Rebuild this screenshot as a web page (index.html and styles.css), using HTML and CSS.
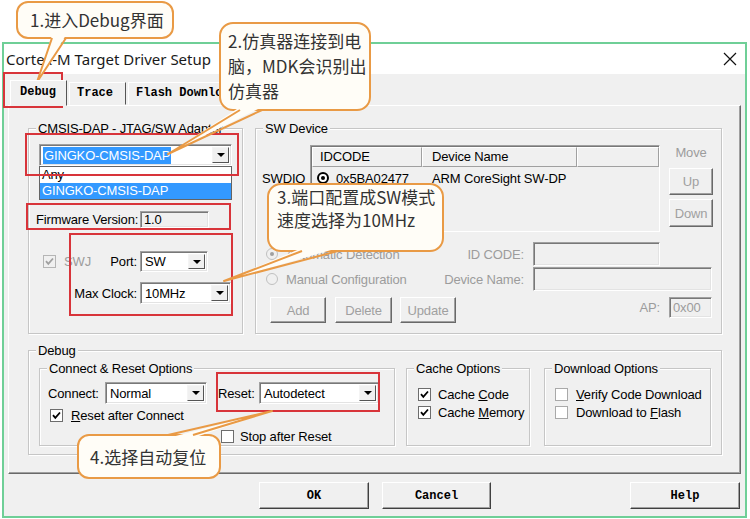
FILE: index.html
```html
<!DOCTYPE html>
<html lang="zh-CN">
<head>
<meta charset="UTF-8" />
<title>Cortex-M Target Driver Setup</title>
<link rel="stylesheet" href="styles.css">
</head>
<body>
<div class="screen">
  <div class="window">
    <div class="titlebar">
      <span class="title">Cortex-M Target Driver Setup</span>
      <svg class="close" width="14" height="14" viewBox="0 0 14 14"><path d="M1 1L13 13M13 1L1 13" stroke="#111" stroke-width="1.2" fill="none"/></svg>
    </div>

    <div class="client">
      <div class="tabs">
        <div class="tab active">Debug</div>
        <div class="tab">Trace</div>
        <div class="tab">Flash Download</div>
      </div>

      <div class="panel">
        <div class="top-row">
          <!-- adapter selection -->
          <div class="group adapter">
            <span class="group-title">CMSIS-DAP - JTAG/SW Adapter</span>
            <div class="combo open">
              <span class="val"><span class="sel">GINGKO-CMSIS-DAP</span></span>
              <span class="arrow"></span>
            </div>
            <div class="dd-list">
              <div class="dd-item">Any</div>
              <div class="dd-item hl">GINGKO-CMSIS-DAP</div>
            </div>
            <div class="fw-row">
              <span class="fw-label">Firmware Version:</span>
              <span class="edit ro fw-box">1.0</span>
            </div>
            <div class="cfg-row first">
              <div class="cfg-label">
                <span class="check dis on"><svg width="11" height="11" viewBox="0 0 11 11"><path d="M2 5.2l2.3 2.6 4.7-5.3" fill="none" stroke="#a0a0a0" stroke-width="1.8"/></svg></span>
                <span class="dim swj">SWJ</span>
                <span class="push">Port:</span>
              </div>
              <div class="combo port"><span class="val">SW</span><span class="arrow"></span></div>
            </div>
            <div class="cfg-row">
              <div class="cfg-label"><span class="push">Max Clock:</span></div>
              <div class="combo clock"><span class="val">10MHz</span><span class="arrow"></span></div>
            </div>
          </div>

          <!-- detected devices -->
          <div class="group swdev">
            <span class="group-title">SW Device</span>
            <div class="sw-top">
              <div class="swdio">SWDIO</div>
              <div class="table">
                <div class="thead">
                  <span class="th c1">IDCODE</span>
                  <span class="th c2">Device Name</span>
                  <span class="th c3"></span>
                </div>
                <div class="trow">
                  <span class="td c1"><span class="radio bold on"></span>0x5BA02477</span>
                  <span class="td c2">ARM CoreSight SW-DP</span>
                </div>
              </div>
              <div class="move-col">
                <div class="dim move">Move</div>
                <div class="sbtn up">Up</div>
                <div class="sbtn down">Down</div>
              </div>
            </div>
            <div class="det-row first">
              <div class="det-label">
                <span class="radio dis on"></span><span class="dim">Automatic Detection</span>
                <span class="push dim">ID CODE:</span>
              </div>
              <span class="edit ro idcode"></span>
            </div>
            <div class="det-row">
              <div class="det-label">
                <span class="radio dis"></span><span class="dim">Manual Configuration</span>
                <span class="push dim">Device Name:</span>
              </div>
              <span class="edit ro devname"></span>
            </div>
            <div class="act-row">
              <div class="sbtn add">Add</div>
              <div class="sbtn del">Delete</div>
              <div class="sbtn upd">Update</div>
              <span class="dim ap-label">AP:</span>
              <span class="edit ro ap-box dim">0x00</span>
            </div>
          </div>
        </div>

        <!-- debug options -->
        <div class="group debug">
          <span class="group-title">Debug</span>
          <div class="dbg-row">
            <div class="group connect">
              <span class="group-title">Connect &amp; Reset Options</span>
              <div class="conn-row">
                <span class="conn-label">Connect:</span>
                <div class="combo normal"><span class="val">Normal</span><span class="arrow"></span></div>
                <span class="reset-label">Reset:</span>
                <div class="combo reset"><span class="val">Autodetect</span><span class="arrow"></span></div>
              </div>
              <div class="opt after-connect">
                <span class="check on"><svg width="11" height="11" viewBox="0 0 11 11"><path d="M2 5.2l2.3 2.6 4.7-5.3" fill="none" stroke="#000" stroke-width="1.8"/></svg></span>
                <span class="opt-text"><u>R</u>eset after Connect</span>
              </div>
              <div class="opt stop-reset">
                <span class="check"></span>
                <span class="opt-text">Stop after Reset</span>
              </div>
            </div>
            <div class="group cache">
              <span class="group-title">Cache Options</span>
              <div class="opt first">
                <span class="check on"><svg width="11" height="11" viewBox="0 0 11 11"><path d="M2 5.2l2.3 2.6 4.7-5.3" fill="none" stroke="#000" stroke-width="1.8"/></svg></span>
                <span class="opt-text">Cache <u>C</u>ode</span>
              </div>
              <div class="opt">
                <span class="check on"><svg width="11" height="11" viewBox="0 0 11 11"><path d="M2 5.2l2.3 2.6 4.7-5.3" fill="none" stroke="#000" stroke-width="1.8"/></svg></span>
                <span class="opt-text">Cache <u>M</u>emory</span>
              </div>
            </div>
            <div class="group download">
              <span class="group-title">Download Options</span>
              <div class="opt first">
                <span class="check light"></span>
                <span class="opt-text"><u>V</u>erify Code Download</span>
              </div>
              <div class="opt">
                <span class="check light"></span>
                <span class="opt-text">Download to <u>F</u>lash</span>
              </div>
            </div>
          </div>
        </div>
      </div>

      <div class="buttons">
        <button class="btn">OK</button>
        <button class="btn cancel">Cancel</button>
        <button class="btn help">Help</button>
      </div>
    </div>
  </div>

  <!-- annotations: highlight frames and callouts -->
  <svg class="annot" width="750" height="519" viewBox="0 0 750 519">
    <g fill="none" stroke="#d8343a" stroke-width="2">
      <rect x="4" y="73" width="58" height="34"/>
      <rect x="26" y="134" width="212" height="41"/>
      <rect x="27" y="204" width="203" height="25"/>
      <rect x="70" y="234" width="162" height="81"/>
      <rect x="217" y="373" width="162" height="38"/>
    </g>
    <g fill="#fffdf7" stroke="#e99a45" stroke-width="2" stroke-linejoin="round">
      <rect x="17" y="2" width="156" height="36" rx="11"/>
      <polygon points="52,35 66,35 37,82" stroke="none"/>
      <polyline points="52,38 37,82 66,38" fill="none"/>

      <rect x="220" y="23" width="150" height="87" rx="13"/>
      <polygon points="240,107 262,107 168,154" stroke="none"/>
      <polyline points="240,110 168,154 262,110" fill="none"/>

      <rect x="268" y="184" width="175" height="67" rx="13"/>
      <polygon points="302,248 338,248 224,281" stroke="none"/>
      <polyline points="302,251 224,281 338,251" fill="none"/>

      <rect x="78" y="435" width="142" height="43" rx="11"/>
      <polygon points="168,438 193,438 272,411" stroke="none"/>
      <polyline points="168,435 272,411 193,435" fill="none"/>
    </g>
  </svg>
  <div class="note note-1">1.进入Debug界面</div>
  <div class="note note-2">2.仿真器连接到电<br>脑，MDK会识别出<br>仿真器</div>
  <div class="note note-3">3.端口配置成SW模式<br>速度选择为10MHz</div>
  <div class="note note-4">4.选择自动复位</div>
</div>
</body>
</html>
```

FILE: styles.css
```css
* { box-sizing: border-box; }
body {
  margin: 0;
  background: #fff;
  font-family: "Liberation Sans", Arial, sans-serif;
  font-size: 13px;
  line-height: 15px;
  letter-spacing: -0.15px;
  color: #000;
}
.screen {
  position: relative;
  width: 750px;
  height: 519px;
  overflow: hidden;
  padding: 42px 0 0 2px;
}
.window {
  width: 745px;
  height: 476px;
  border: 2px solid #6fcf97;
  background: #f0f0f0;
  display: flex;
  flex-direction: column;
}
.titlebar {
  height: 30px;
  background: #fff;
  display: flex;
  align-items: center;
  padding: 0 8px 0 2px;
  flex-shrink: 0;
}
.title {
  font-family: "Noto Sans", sans-serif;
  font-size: 15px;
  letter-spacing: 0;
  color: #1a1a1a;
}
.close { margin-left: auto; }

.client {
  flex: 1;
  padding: 6px 4px 0 4px;
}

/* tabs */
.tabs {
  display: flex;
  align-items: flex-end;
  height: 25px;
  padding-left: 2px;
  font-family: "Liberation Mono", monospace;
  font-weight: bold;
  font-size: 12px;
  letter-spacing: 0;
}
.tab {
  height: 23px;
  line-height: 21px;
  padding: 0 12px 0 7px;
  border: 1px solid;
  border-color: #fff #555 transparent #fff;
  margin-left: 2px;
  white-space: nowrap;
}
.tab.active {
  height: 26px;
  margin: 0 0 -1px 0;
  padding: 1px 10px 0 9px;
  background: #f0f0f0;
  position: relative;
  z-index: 1;
  border-color: #fff #555 #f0f0f0 #fff;
}

.panel {
  height: 369px;
  border: 1px solid;
  border-color: #fff #696969 #696969 #fff;
  box-shadow: inset -1px -1px 0 #a0a0a0;
  padding: 22px 0 0 19px;
}

/* group boxes */
.group {
  position: relative;
  border: 1px solid #c6c6c6;
  box-shadow: inset 1px 1px 0 #fff, 1px 1px 0 #fff;
}
.group-title {
  position: absolute;
  top: -8px;
  left: 7px;
  padding: 0 2px;
  background: #f0f0f0;
  white-space: nowrap;
}
.top-row {
  display: flex;
  gap: 12px;
  height: 206px;
}
.adapter { width: 215px; }
.swdev { width: 467px; }

.dim { color: #9c9c9c; }
.push { margin-left: auto; }

/* edits and combos */
.edit {
  display: flex;
  align-items: center;
  background: #fff;
  border: 1px solid;
  border-color: #a0a0a0 #fff #fff #a0a0a0;
  box-shadow: inset 1px 1px 0 #787878, inset -1px -1px 0 #e3e3e3;
  padding-left: 3px;
}
.edit.ro { background: #f0f0f0; }

.combo {
  display: flex;
  align-items: center;
  height: 22px;
  background: #fff;
  border: 1px solid;
  border-color: #a0a0a0 #fff #fff #a0a0a0;
  box-shadow: inset 1px 1px 0 #787878, inset -1px -1px 0 #e3e3e3;
  padding: 2px;
}
.combo .val {
  flex: 1;
  padding-left: 2px;
  white-space: nowrap;
}
.combo .arrow {
  width: 17px;
  align-self: stretch;
  background: #f0f0f0;
  border: 1px solid;
  border-color: #f4f4f4 #555 #555 #f4f4f4;
  display: flex;
  align-items: center;
  justify-content: center;
}
.combo .arrow::after {
  content: "";
  border-left: 4px solid transparent;
  border-right: 4px solid transparent;
  border-top: 4px solid #000;
}
.combo.open {
  margin: 15px 0 0 10px;
  width: 193px;
}
.combo.open .val { padding-left: 1px; }
.sel {
  background: #3399ff;
  color: #fff;
  padding: 1px 1px;
}
.dd-list {
  margin-left: 10px;
  width: 193px;
  height: 34px;
  background: #fff;
  border: 1px solid #646464;
}
.dd-item {
  height: 16px;
  line-height: 16px;
  padding-left: 2px;
}
.dd-item.hl {
  background: #3399ff;
  color: #fff;
}

.fw-row {
  display: flex;
  align-items: center;
  margin: 11px 0 0 7px;
  height: 17px;
}
.fw-label { width: 104px; white-space: nowrap; }
.fw-box { width: 69px; height: 17px; }

.cfg-row {
  display: flex;
  align-items: center;
  margin: 10px 0 0 10px;
}
.cfg-row.first { margin-top: 23px; }
.cfg-label {
  width: 101px;
  display: flex;
  align-items: center;
  padding-right: 3px;
  white-space: nowrap;
}
.cfg-label .check { margin-left: 4px; }
.swj { margin-left: 8px; }
.combo.port { width: 68px; height: 21px; }
.combo.clock { width: 91px; }

/* check boxes and radios */
.check {
  width: 13px;
  height: 13px;
  flex-shrink: 0;
  background: #fff;
  border: 1px solid #6d6d6d;
  display: flex;
  align-items: center;
  justify-content: center;
}
.check.light { border-color: #a9a9a9; }
.check.dis { background: #f0f0f0; border-color: #b5b5b5; }

.radio {
  width: 12px;
  height: 12px;
  flex-shrink: 0;
  border-radius: 50%;
  background: #fff;
  border: 1px solid #9a9a9a;
  display: inline-flex;
  align-items: center;
  justify-content: center;
}
.radio.on::after {
  content: "";
  width: 4px;
  height: 4px;
  border-radius: 50%;
  background: #000;
}
.radio.bold { border: 2px solid #000; }
.radio.dis { background: #f0f0f0; border-color: #c0c0c0; }
.radio.dis.on::after { background: #a0a0a0; }

/* SW device list */
.sw-top {
  display: flex;
  margin-top: 16px;
}
.swdio {
  width: 54px;
  padding: 26px 0 0 6px;
}
.table {
  width: 350px;
  height: 87px;
  border: 1px solid;
  border-color: #a0a0a0 #fff #fff #a0a0a0;
  box-shadow: inset 1px 1px 0 #787878;
  background: #f0f0f0;
  padding: 1px 0 0 1px;
}
.thead {
  display: flex;
  height: 20px;
}
.th {
  border: 1px solid;
  border-color: #fff #a0a0a0 #a0a0a0 #fff;
  line-height: 18px;
  white-space: nowrap;
}
.th.c1, .td.c1 { width: 110px; }
.th.c2, .td.c2 { width: 155px; }
.th.c3 { flex: 1; }
.th.c1 { padding-left: 7px; }
.th.c2 { padding-left: 9px; }
.trow {
  display: flex;
  height: 22px;
  align-items: center;
}
.td { display: flex; align-items: center; white-space: nowrap; }
.td.c1 { padding-left: 5px; gap: 7px; }
.td.c2 { padding-left: 10px; }

.move-col {
  margin-left: 9px;
  width: 44px;
}
.move {
  height: 22px;
  line-height: 16px;
  text-align: center;
}
.sbtn {
  display: flex;
  align-items: center;
  justify-content: center;
  color: #a0a0a0;
  background: #f0f0f0;
  border: 1px solid;
  border-color: #fff #696969 #696969 #fff;
  box-shadow: inset -1px -1px 0 #a0a0a0;
}
.sbtn.up { height: 27px; margin-top: 1px; }
.sbtn.down { height: 28px; margin-top: 4px; }

.det-row {
  display: flex;
  align-items: center;
  height: 24px;
  margin-top: 1px;
}
.det-row.first { margin-top: 10px; }
.det-label {
  width: 277px;
  display: flex;
  align-items: center;
  padding: 0 9px 0 10px;
  gap: 8px;
  white-space: nowrap;
}
.idcode { width: 127px; height: 24px; }
.devname { width: 179px; height: 24px; }

.act-row {
  display: flex;
  align-items: flex-start;
  margin-top: 6px;
  padding: 0 9px 0 14px;
}
.act-row .sbtn { height: 26px; }
.sbtn.add { width: 56px; }
.sbtn.del { width: 57px; margin-left: 9px; }
.sbtn.upd { width: 56px; margin-left: 8px; }
.ap-label { margin-left: auto; line-height: 21px; }
.ap-box { width: 43px; height: 21px; margin-left: 9px; }

/* debug section */
.debug {
  margin-top: 16px;
  width: 694px;
  height: 105px;
}
.dbg-row {
  display: flex;
  margin-top: 17px;
  padding-left: 10px;
}
.dbg-row .group { height: 78px; }
.connect { width: 356px; }
.cache { width: 124px; margin-left: 11px; }
.download { width: 167px; margin-left: 14px; }

.conn-row {
  display: flex;
  align-items: center;
  margin-top: 13px;
  padding-left: 8px;
}
.conn-label { width: 57px; }
.combo.normal { width: 102px; }
.reset-label { width: 41px; margin-left: 11px; }
.combo.reset { width: 120px; }

.opt {
  display: flex;
  align-items: center;
  height: 13px;
  margin-top: 5px;
  white-space: nowrap;
}
.opt-text { margin-left: 8px; }
.after-connect { padding-left: 10px; }
.stop-reset { padding-left: 181px; margin-top: 8px; }
.stop-reset .opt-text { margin-left: 6px; }
.cache .opt { padding-left: 11px; }
.cache .opt-text { margin-left: 7px; }
.download .opt { padding-left: 10px; }
.opt.first { margin-top: 19px; }

/* dialog buttons */
.buttons {
  display: flex;
  margin-top: 8px;
  padding: 0 1px 0 251px;
}
.btn {
  width: 110px;
  height: 27px;
  padding: 0;
  font-family: "Liberation Mono", monospace;
  font-weight: bold;
  font-size: 12px;
  color: #000;
  background: #f0f0f0;
  border: 1px solid;
  border-color: #fff #404040 #404040 #fff;
  box-shadow: inset -1px -1px 0 #a0a0a0;
}
.btn.cancel { width: 109px; margin-left: 13px; }
.btn.help { margin-left: auto; }

/* annotations */
.annot {
  position: absolute;
  top: 0;
  left: 0;
}
.note {
  position: absolute;
  font-family: "Noto Sans CJK SC", "Noto Sans", sans-serif;
  font-size: 17px;
  line-height: 24px;
  letter-spacing: 0;
  color: #333;
  white-space: nowrap;
}
.note-1 { left: 30px; top: 8px; }
.note-2 { left: 228px; top: 28px; line-height: 25px; }
.note-3 { left: 277px; top: 185px; line-height: 23px; }
.note-4 { left: 90px; top: 445px; }
```
